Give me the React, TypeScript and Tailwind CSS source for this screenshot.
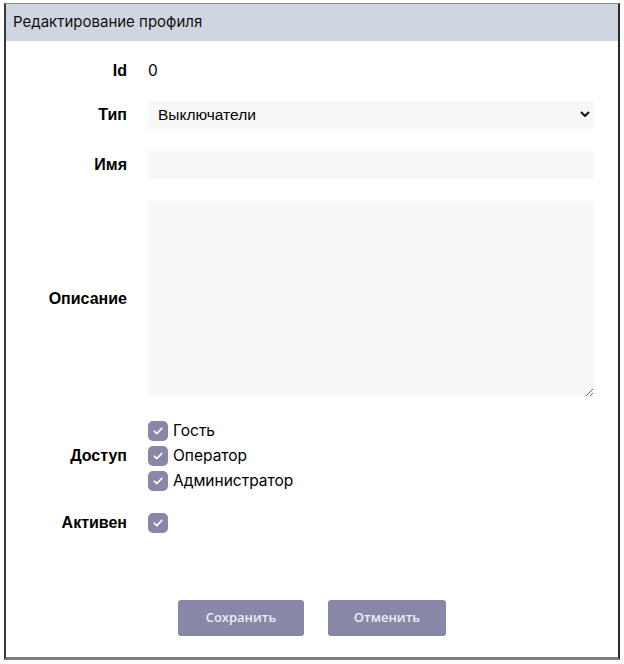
import React, { useState } from "react";

const labelCls =
  "w-[121px] shrink-0 text-right font-bold text-[16px] text-black font-['Liberation_Sans',Arial,sans-serif]";

function Check({ checked, onToggle }: { checked: boolean; onToggle: () => void }) {
  return (
    <button
      type="button"
      onClick={onToggle}
      className={`w-5 h-5 rounded-[5px] flex items-center justify-center shrink-0 ${
        checked ? "bg-[#8887a8]" : "bg-white border border-[#8887a8]"
      }`}
    >
      {checked && (
        <svg width="10" height="8" viewBox="0 0 10 8" fill="none">
          <path d="M1.2 4.2 L3.8 6.6 L8.8 1.4" stroke="white" strokeWidth="1.6" strokeLinecap="round" strokeLinejoin="round" />
        </svg>
      )}
    </button>
  );
}

export default function App() {
  const [access, setAccess] = useState({ guest: true, operator: true, admin: true });
  const [active, setActive] = useState(true);
  const [type, setType] = useState("Выключатели");

  const roles: { key: keyof typeof access; label: string }[] = [
    { key: "guest", label: "Гость" },
    { key: "operator", label: "Оператор" },
    { key: "admin", label: "Администратор" },
  ];

  return (
    <div className="w-[624px] h-[664px] bg-white pt-[3px] pl-[4px]">
      <div className="w-[616px] h-[657px] border-l-2 border-r-2 border-l-[#3a3a3a] border-r-[#2a2a2a] border-t border-b-[3px] border-t-[#8a8a8a] border-b-[#7d7d7d] flex flex-col">
        <div className="h-[37px] bg-[#cfd6e2] flex items-center pl-[7px] text-[15px] text-[#111] font-['Inter',sans-serif]">
          Редактирование профиля
        </div>

        <div className="flex flex-col pr-[24px]">
          {/* Id */}
          <div className="flex items-center gap-[21px] mt-[16px] h-[28px]">
            <div className={labelCls}>Id</div>
            <div className="text-[15.5px] text-black font-['Inter',sans-serif]">0</div>
          </div>

          {/* Тип */}
          <div className="flex items-center gap-[21px] mt-[16px]">
            <div className={labelCls}>Тип</div>
            <div className="relative flex-1 h-[28px]">
              <select
                value={type}
                onChange={(e) => setType(e.target.value)}
                className="appearance-none w-full h-full bg-[#f8f8f8] pl-[10px] text-[15.5px] text-black outline-none font-['Liberation_Sans',Arial,sans-serif]"
              >
                <option>Выключатели</option>
                <option>Датчики</option>
                <option>Реле</option>
              </select>
              <svg className="absolute right-[4px] top-[10px] pointer-events-none" width="10" height="7" viewBox="0 0 10 7" fill="none">
                <path d="M1.5 1.5 L5 5 L8.5 1.5" stroke="#111" strokeWidth="2" strokeLinecap="round" strokeLinejoin="round" />
              </svg>
            </div>
          </div>

          {/* Имя */}
          <div className="flex items-center gap-[21px] mt-[22px]">
            <div className={labelCls}>Имя</div>
            <input className="flex-1 h-[28px] bg-[#f8f8f8] px-[10px] text-[15px] outline-none" />
          </div>

          {/* Описание */}
          <div className="flex items-center gap-[21px] mt-[22px]">
            <div className={labelCls}>Описание</div>
            <textarea className="flex-1 h-[196px] bg-[#f8f8f8] px-[10px] py-[6px] text-[15px] outline-none" />
          </div>

          {/* Доступ */}
          <div className="flex items-center gap-[21px] mt-[24px]">
            <div className={labelCls}>Доступ</div>
            <div className="flex flex-col gap-[5px]">
              {roles.map((r) => (
                <label key={r.key} className="flex items-center gap-[5px] h-[20px] cursor-pointer">
                  <Check
                    checked={access[r.key]}
                    onToggle={() => setAccess((a) => ({ ...a, [r.key]: !a[r.key] }))}
                  />
                  <span className="text-[15.5px] text-black font-['Inter',sans-serif]">{r.label}</span>
                </label>
              ))}
            </div>
          </div>

          {/* Активен */}
          <div className="flex items-center gap-[21px] mt-[22px] h-[20px]">
            <div className={labelCls}>Активен</div>
            <Check checked={active} onToggle={() => setActive(!active)} />
          </div>
        </div>

        {/* Actions */}
        <div className="flex mt-[67px] pl-[172px] gap-[24px]">
          <button className="w-[126px] h-[36px] rounded-[3px] bg-[#8887a8] text-[#eeeef6] text-[13px] font-semibold font-['Open_Sans',sans-serif]">
            Сохранить
          </button>
          <button className="w-[118px] h-[36px] rounded-[3px] bg-[#8887a8] text-[#eeeef6] text-[13px] font-semibold font-['Open_Sans',sans-serif]">
            Отменить
          </button>
        </div>
      </div>
    </div>
  );
}
